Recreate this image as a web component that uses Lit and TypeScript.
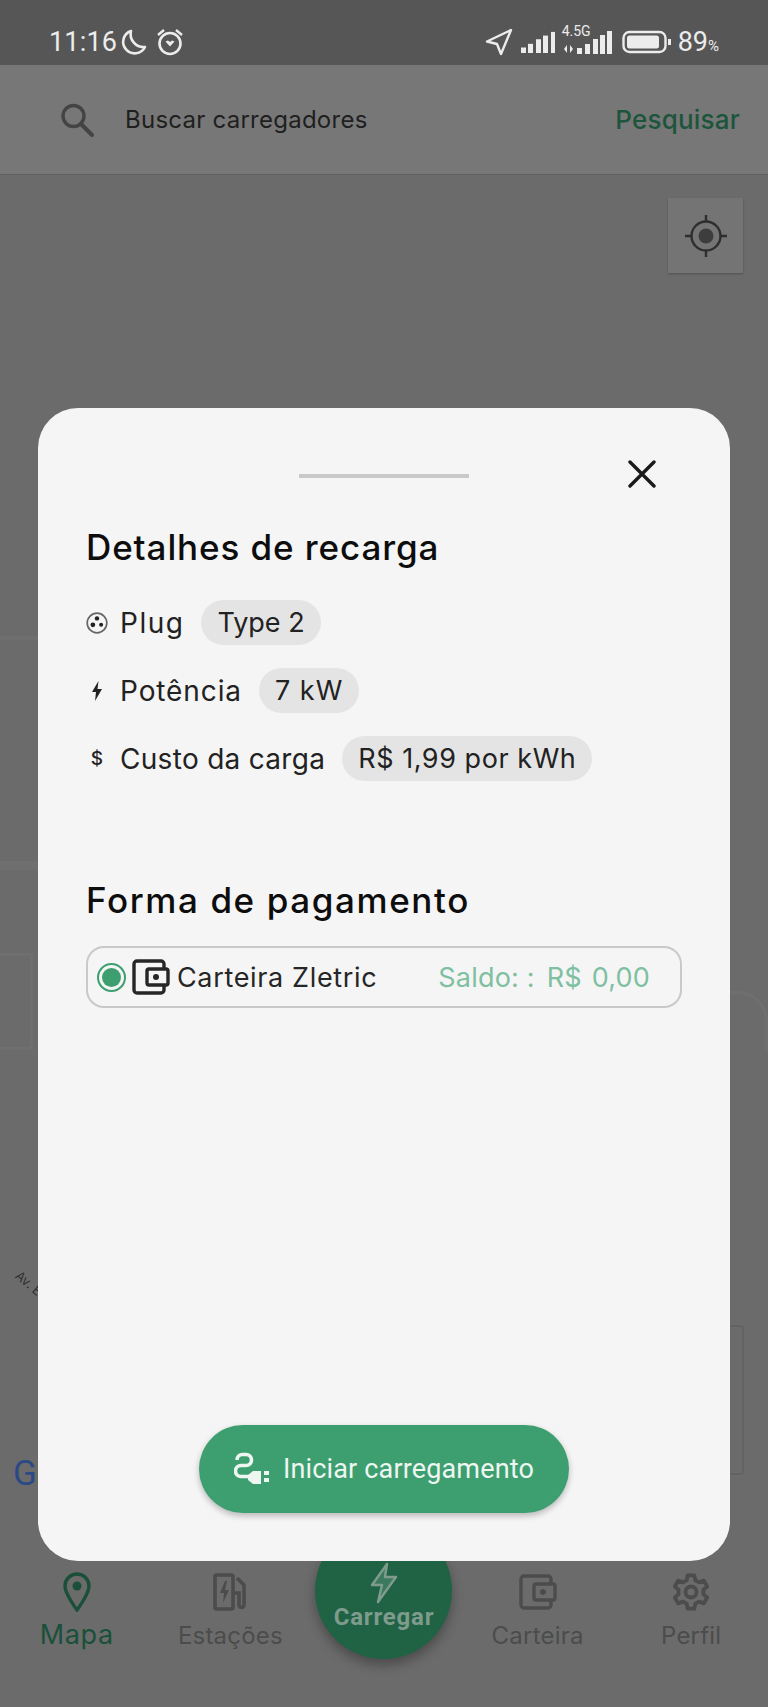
import { LitElement, html, css, svg } from 'lit';
import { customElement } from 'lit/decorators.js';

const walletIcon = svg`<rect x="2" y="2" width="30" height="32" rx="3" fill="none" stroke="currentColor" stroke-width="3.4"/><rect x="15" y="10" width="21" height="16" rx="2" fill="var(--wallet-bg)" stroke="currentColor" stroke-width="3.4"/><circle cx="24" cy="18" r="3" fill="currentColor"/>`;

@customElement('app-root')
export class AppRoot extends LitElement {
  static styles = css`
    :host {
      display: block;
      position: relative;
      width: 768px;
      height: 1707px;
      overflow: hidden;
      background: #6b6b6b;
      font-family: 'Inter', 'Liberation Sans', sans-serif;
      --green: #3d9f70;
    }

    .page {
      display: flex;
      flex-direction: column;
      height: 1707px;
    }

    .status {
      height: 65px;
      box-sizing: border-box;
      flex: none;
      display: flex;
      align-items: center;
      justify-content: space-between;
      padding: 18px 49px 0 49px;
      background: #565656;
      color: #ececec;
      font-family: 'Roboto', sans-serif;
    }

    .status-side {
      display: flex;
      align-items: center;
    }

    .time {
      font-size: 27px;
      letter-spacing: 0.2px;
      margin-right: 3px;
    }

    .alarm {
      margin-left: 7px;
    }

    .bars {
      margin-left: 8px;
    }

    .battery {
      margin-left: 10px;
    }

    .pct {
      font-size: 27px;
      margin-left: 6px;
    }

    .pct small {
      font-size: 15px;
    }

    .lte {
      position: relative;
      margin-left: 6px;
    }

    .lte svg {
      display: block;
    }

    .lte span {
      position: absolute;
      left: 0;
      top: -7px;
      font-size: 14px;
      line-height: 16px;
    }

    .search {
      height: 110px;
      flex: none;
      box-sizing: border-box;
      display: flex;
      align-items: center;
      padding: 0 28px 0 60px;
      background: #777;
      border-bottom: 1px solid #5f5f5f;
    }

    .search-icon {
      margin-right: 31px;
      color: #444;
    }

    .search-text {
      flex: 1;
      font-size: 24px;
      color: #1f1f1f;
      letter-spacing: 0.25px;
    }

    .search-action {
      font-size: 26px;
      font-weight: 500;
      letter-spacing: 0.2px;
      color: #1c553c;
    }

    .map {
      flex: 1;
      position: relative;
      background: #6b6b6b;
    }

    .locate {
      position: absolute;
      left: 668px;
      top: 23px;
      width: 75px;
      height: 75px;
      display: flex;
      align-items: center;
      justify-content: center;
      background: #747474;
      box-shadow: 0 1px 2px rgba(0, 0, 0, 0.25);
    }

    .road {
      position: absolute;
      box-sizing: border-box;
      background: #6f6f6f;
    }

    .road.r1 {
      left: 0;
      top: 461px;
      width: 38px;
      height: 4px;
    }

    .road.r2 {
      left: 0;
      top: 686px;
      width: 38px;
      height: 9px;
    }

    .road.r3 {
      left: 0;
      top: 778px;
      width: 33px;
      height: 97px;
      background: none;
      border: 3px solid #6f6f6f;
      border-left: 0;
    }

    .road.r4 {
      left: 730px;
      top: 816px;
      width: 38px;
      height: 60px;
      background: none;
      border-top: 3px solid #6f6f6f;
      border-right: 3px solid #6f6f6f;
      border-top-right-radius: 30px;
    }

    .road.r5 {
      left: 730px;
      top: 1150px;
      width: 14px;
      height: 150px;
      background: none;
      border: 2px solid #636363;
      border-left: 0;
      border-radius: 0 3px 3px 0;
    }

    .street {
      position: absolute;
      left: 14px;
      top: 1100px;
      font-size: 13px;
      color: #2f2f2f;
      transform: rotate(40deg);
    }

    .google {
      position: absolute;
      left: 13px;
      top: 1281px;
      font-size: 35px;
      line-height: 36px;
      font-family: 'Roboto', sans-serif;
      color: #2b4a85;
    }

    .nav {
      height: 197px;
      flex: none;
      box-sizing: border-box;
      display: grid;
      grid-template-columns: repeat(5, 1fr);
      background: #6b6b6b;
      color: #4c4c4c;
    }

    .nav-item {
      display: flex;
      flex-direction: column;
      align-items: center;
      padding-top: 62px;
      font-size: 24px;
      letter-spacing: 0.2px;
    }

    .nav-item svg {
      height: 40px;
      margin-bottom: 9px;
    }

    .nav-item.active {
      color: #1a5039;
      font-size: 27px;
      letter-spacing: 0.6px;
    }

    .nav-item.active svg {
      margin-bottom: 6px;
    }

    .nav-wallet {
      --wallet-bg: #6b6b6b;
    }

    .charge-cell {
      display: flex;
      justify-content: center;
      padding-top: 12px;
    }

    .charge {
      width: 137px;
      height: 137px;
      box-sizing: border-box;
      border-radius: 50%;
      background: #1f6344;
      box-shadow: 0 6px 12px rgba(0, 0, 0, 0.3);
      display: flex;
      flex-direction: column;
      align-items: center;
      justify-content: flex-end;
      padding-bottom: 29px;
      color: #7f9b8d;
      font-family: 'Roboto', sans-serif;
      font-weight: 700;
      font-size: 24px;
      letter-spacing: 0.8px;
      line-height: 26px;
    }

    .modal {
      position: absolute;
      left: 38px;
      top: 408px;
      width: 692px;
      height: 1153px;
      box-sizing: border-box;
      padding: 66px 48px 0;
      border-radius: 40px;
      background: #f5f5f5;
      display: flex;
      flex-direction: column;
    }

    .handle {
      position: absolute;
      left: 261px;
      top: 66px;
      width: 170px;
      height: 4px;
      background: #c9c9c9;
    }

    .close {
      position: absolute;
      left: 590px;
      top: 52px;
      color: #1a1a1a;
    }

    h2 {
      margin: 53px 0 0;
      font-size: 35px;
      line-height: 40px;
      font-weight: 500;
      color: #0d0d0d;
      letter-spacing: 0.9px;
    }

    .rows {
      display: flex;
      flex-direction: column;
      gap: 23px;
      margin-top: 33px;
    }

    .row {
      display: flex;
      align-items: center;
      height: 45px;
      font-size: 28px;
      color: #222;
    }

    .row-icon {
      width: 22px;
      flex: none;
      display: flex;
      justify-content: center;
      margin-right: 12px;
    }

    .dollar {
      font-size: 19px;
      font-weight: 500;
    }

    .pill {
      margin-left: 17px;
      padding: 0 16px;
      height: 45px;
      line-height: 45px;
      font-size: 27px;
      border-radius: 23px;
      background: #e4e4e4;
    }

    /* Inter runs narrower than the original face, each row needs its own tracking */
    .plug .label { letter-spacing: 1.5px; }
    .plug .pill { letter-spacing: 0; }
    .power .label { letter-spacing: 0.9px; }
    .power .pill { letter-spacing: 1px; }
    .cost .label { letter-spacing: 0.3px; }
    .cost .pill { letter-spacing: 0.55px; }

    h2.second {
      margin-top: 99px;
      letter-spacing: 1.6px;
    }

    .payment {
      margin-top: 26px;
      height: 62px;
      box-sizing: border-box;
      border: 2px solid #c9c9c9;
      border-radius: 18px;
      display: flex;
      align-items: center;
      padding: 0 30px 0 9px;
      font-size: 27px;
      color: #262626;
      letter-spacing: 0.65px;
    }

    .radio {
      width: 29px;
      height: 29px;
      box-sizing: border-box;
      border-radius: 50%;
      border: 2px solid var(--green);
      padding: 3px;
      margin-right: 6px;
      flex: none;
    }

    .radio i {
      display: block;
      width: 100%;
      height: 100%;
      border-radius: 50%;
      background: var(--green);
    }

    .wallet {
      --wallet-bg: #f5f5f5;
      color: #262626;
      margin-right: 7px;
      flex: none;
    }

    .payment-name {
      flex: 1;
    }

    .balance {
      color: #7fbfa2;
      letter-spacing: 0.2px;
    }

    .balance b {
      font-weight: 400;
      margin-left: 12px;
      word-spacing: 2px;
    }

    .start {
      position: absolute;
      left: 161px;
      top: 1017px;
      width: 370px;
      height: 88px;
      border-radius: 44px;
      display: flex;
      align-items: center;
      justify-content: center;
      gap: 13px;
      background: var(--green);
      box-shadow: 0 3px 6px rgba(0, 0, 0, 0.25);
      color: #eef6f1;
      font-family: 'Roboto', sans-serif;
      font-size: 27px;
      letter-spacing: 0.15px;
    }
  `;

  render() {
    return html`
      <div class="page">
        <div class="status">
          <div class="status-side">
            <span class="time">11:16</span>
            <svg width="28" height="28" viewBox="0 0 28 28"><path d="M11 3a11.500 11.500 0 1 0 14 16A13 13 0 0 1 11 3z" fill="none" stroke="currentColor" stroke-width="2.600" stroke-linejoin="round"/></svg>
            <svg class="alarm" width="30" height="28" viewBox="0 0 30 28"><circle cx="15" cy="15.500" r="10.500" fill="none" stroke="currentColor" stroke-width="2.600"/><path d="M3 7l6-5M27 7l-6-5" fill="none" stroke="currentColor" stroke-width="2.400"/><path d="M10.500 13.500l4.500 5 4.500-5-2.500-1-2 1.500-2-1.500z" fill="currentColor"/></svg>
          </div>
          <div class="status-side">
            <svg width="28" height="28" viewBox="0 0 28 28"><path d="M26 2L2 13.500l10 2.500 4 10z" fill="none" stroke="currentColor" stroke-width="2.400" stroke-linejoin="round"/></svg>
            <svg class="bars" width="35" height="22" viewBox="0 0 35 24" preserveAspectRatio="none" fill="currentColor"><rect x="0" y="18" width="5" height="6"/><rect x="7" y="14" width="5" height="10"/><rect x="15" y="9" width="5" height="15"/><rect x="22" y="5" width="5" height="19"/><rect x="30" y="1" width="4" height="23"/></svg>
            <div class="lte">
              <span>4.5G</span>
              <svg width="50" height="24" viewBox="0 0 50 24" fill="currentColor"><path d="M5 15l-3 4 3 4zM8 15v8l3-4z"/><rect x="15" y="18" width="5" height="6"/><rect x="23" y="14" width="5" height="10"/><rect x="31" y="9" width="5" height="15"/><rect x="38" y="5" width="5" height="19"/><rect x="45" y="1" width="5" height="23"/></svg>
            </div>
            <svg class="battery" width="50" height="24" viewBox="0 0 50 24"><rect x="1.500" y="2" width="42" height="20" rx="6" fill="none" stroke="currentColor" stroke-width="2.400"/><rect x="5" y="5.500" width="32" height="13" rx="2.500" fill="currentColor"/><rect x="46" y="9" width="3" height="6" fill="currentColor"/></svg>
            <span class="pct">89<small>%</small></span>
          </div>
        </div>

        <div class="search">
          <svg class="search-icon" width="34" height="34" viewBox="0 0 34 34" fill="none" stroke="currentColor"><circle cx="13.500" cy="13" r="10.500" stroke-width="3.400"/><path d="M21 21l11 11" stroke-width="4" stroke-linecap="round"/></svg>
          <span class="search-text">Buscar carregadores</span>
          <span class="search-action">Pesquisar</span>
        </div>

        <div class="map">
          <div class="road r1"></div>
          <div class="road r2"></div>
          <div class="road r3"></div>
          <div class="road r4"></div>
          <div class="road r5"></div>
          <div class="locate">
            <svg width="42" height="42" viewBox="0 0 42 42" fill="none" stroke="#2e2e2e" stroke-width="2.400"><circle cx="21" cy="21" r="14.500"/><circle cx="21" cy="21" r="7.500" fill="#3d3d3d" stroke="none"/><path d="M21 0v6.500M21 35.500V42M0 21h6.500M35.500 21H42"/></svg>
          </div>
          <div class="street">Av. E</div>
          <div class="google">G</div>
        </div>

        <div class="nav">
          <div class="nav-item active">
            <svg width="28" height="40" viewBox="0 0 28 40"><path d="M14 2a12 12 0 0 0-12 12c0 8 12 24 12 24s12-16 12-24A12 12 0 0 0 14 2z" fill="none" stroke="currentColor" stroke-width="3.400"/><circle cx="14" cy="14" r="4.500" fill="currentColor"/></svg>
            Mapa
          </div>
          <div class="nav-item">
            <svg width="34" height="38" viewBox="0 0 34 38" fill="none" stroke="currentColor" stroke-width="3.600"><rect x="2" y="2" width="18" height="34" rx="1.500"/><path d="M12 8l-5 12h4l-1 10 6-13h-4l2-9z" fill="currentColor" stroke="none"/><path d="M24 5l7 7v20a2.500 2.500 0 0 1-5 0V20h-5"/></svg>
            Estações
          </div>
          <div class="charge-cell">
            <div class="charge">
              <svg width="30" height="42" viewBox="0 0 30 42" fill="#3c7a5e" stroke="#7f9b8d" stroke-width="2.400" stroke-linejoin="round"><path d="M18 2L3 23h10l-4 17 18-25H16z"/></svg>
              Carregar
            </div>
          </div>
          <div class="nav-item nav-wallet">
            <svg width="38" height="36" viewBox="0 0 38 36">${walletIcon}</svg>
            Carteira
          </div>
          <div class="nav-item">
            <svg width="40" height="40" viewBox="0 0 24 24" fill="none" stroke="currentColor" stroke-width="2.300" stroke-linejoin="round"><circle cx="12" cy="12" r="3.300"/><path d="M10 2h4l.6 3 2.200 1.200 2.900-1 2 3.500-2.300 2a7 7 0 0 1 0 2.600l2.300 2-2 3.500-2.900-1-2.200 1.200-.6 3h-4l-.6-3-2.200-1.200-2.900 1-2-3.500 2.300-2a7 7 0 0 1 0-2.600l-2.300-2 2-3.500 2.900 1L9.400 5z"/></svg>
            Perfil
          </div>
        </div>
      </div>

      <div class="modal">
        <div class="handle"></div>
        <svg class="close" width="28" height="28" viewBox="0 0 28 28" stroke="currentColor" stroke-width="3.400" stroke-linecap="round"><path d="M2 2l24 24M26 2L2 26"/></svg>

        <h2>Detalhes de recarga</h2>
        <div class="rows">
          <div class="row plug">
            <span class="row-icon"><svg width="24" height="24" viewBox="0 0 24 24"><circle cx="12" cy="12" r="10.700" fill="none" stroke="#666" stroke-width="1.800"/><circle cx="12" cy="7" r="2.400" fill="#222"/><circle cx="7.500" cy="14" r="2.600" fill="#222"/><circle cx="16.500" cy="14" r="2.200" fill="#222"/></svg></span>
            <span class="label">Plug</span><span class="pill">Type 2</span>
          </div>
          <div class="row power">
            <span class="row-icon"><svg width="12" height="20" viewBox="0 0 12 20"><path d="M7.500 0L1 11h4l-1 9 7-12H6.500z" fill="#222"/></svg></span>
            <span class="label">Potência</span><span class="pill">7 kW</span>
          </div>
          <div class="row cost">
            <span class="row-icon"><span class="dollar">$</span></span>
            <span class="label">Custo da carga</span><span class="pill">R$ 1,99 por kWh</span>
          </div>
        </div>

        <h2 class="second">Forma de pagamento</h2>
        <div class="payment">
          <span class="radio"><i></i></span>
          <svg class="wallet" width="38" height="36" viewBox="0 0 38 36">${walletIcon}</svg>
          <span class="payment-name">Carteira Zletric</span>
          <span class="balance">Saldo: :<b>R$ 0,00</b></span>
        </div>

        <div class="start">
          <svg width="36" height="34" viewBox="0 0 36 34" fill="none" stroke="currentColor" stroke-width="3.600"><path d="M3 8a5.500 5.500 0 0 1 5.500-5.500H12a5.500 5.500 0 0 1 0 11H7a5.500 5.500 0 0 0 0 11h8"/><path d="M14 23l5-4h8v13h-8l-5-4z" fill="currentColor" stroke="none"/><path d="M30 21h5M30 28h5" stroke-width="4"/></svg>
          Iniciar carregamento
        </div>
      </div>
    `;
  }
}
